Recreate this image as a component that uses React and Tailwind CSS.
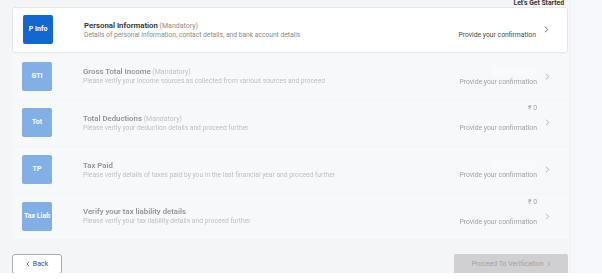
import React from 'react';

const rows = [
  {
    code: 'P Info',
    title: 'Personal Information',
    mandatory: true,
    desc: 'Details of personal information, contact details, and bank account details',
    top: 'none',
    active: true,
    h: 'h-[46px]',
  },
  {
    code: 'GTI',
    title: 'Gross Total Income',
    mandatory: true,
    desc: 'Please verify your income sources as collected from various sources and proceed',
    top: 'blur',
    h: 'h-[46px]',
  },
  {
    code: 'Tot',
    title: 'Total Deductions',
    mandatory: true,
    desc: 'Please verify your deduction details and proceed further',
    top: 'amount',
    h: 'h-[47px]',
  },
  {
    code: 'TP',
    title: 'Tax Paid',
    mandatory: false,
    desc: 'Please verify details of taxes paid by you in the last financial year and proceed further',
    top: 'blur',
    h: 'h-[47px]',
  },
  {
    code: 'Tax Liab',
    title: 'Verify your tax liability details',
    mandatory: false,
    desc: 'Please verify your tax liability details and proceed further',
    top: 'amount',
    h: 'h-[46px]',
  },
];

function Chevron({ className }) {
  return (
    <svg viewBox="0 0 6 8" className={className} fill="none" stroke="currentColor" strokeWidth="1.1" strokeLinecap="round" strokeLinejoin="round">
      <path d="M1.5 1 L4.5 4 L1.5 7" />
    </svg>
  );
}

function Row({ row }) {
  return (
    <div
      className={`${row.h} flex items-center ${
        row.active ? 'bg-white border border-[#e6e7ea] rounded-[3px]' : 'bg-white/60 opacity-50 border-t border-[#f3f3f5]'
      }`}
    >
      {/* icon tile */}
      <div className="ml-[10px] w-[30px] h-[29px] shrink-0 rounded-[2px] bg-[#1168d3] flex items-center justify-center overflow-hidden">
        <span className="text-white font-bold text-[7px] leading-none whitespace-nowrap">{row.code}</span>
      </div>

      {/* title + description */}
      <div className="ml-[31px] flex-1 min-w-0 flex flex-col">
        <div className="text-[7.8px] leading-[10px] text-[#2f2f2f] font-semibold whitespace-nowrap">
          {row.title}
          {row.mandatory && <span className="font-normal text-[#8c8c8c] text-[7px]"> (Mandatory)</span>}
        </div>
        <div className="text-[6.7px] leading-[8px] text-[#8a8a8a] whitespace-nowrap overflow-hidden">{row.desc}</div>
      </div>

      {/* right side */}
      <div className="flex flex-col items-end mb-[9px] shrink-0">
        {row.top === 'amount' && (
          <div className="h-[8px] leading-[8px] mb-[12px] text-[6.8px] text-[#555]">₹ 0</div>
        )}
        {row.top === 'blur' && (
          <div className="h-[10px] w-[45px] mt-[8px] mb-[2px] bg-white rounded-[2px] blur-[1px]" />
        )}
        {row.top === 'none' && <div className="h-[8px] mb-[12px]" />}
        <div className="leading-[8px] text-[6.8px] text-[#4a4a4a] whitespace-nowrap">Provide your confirmation</div>
      </div>
      <Chevron className="ml-[8px] mr-[18px] w-[5px] h-[7px] text-[#666] shrink-0" />
    </div>
  );
}

export default function App() {
  return (
    <div className="w-[602px] h-[279px] overflow-hidden flex flex-col bg-white font-['Roboto',sans-serif]">
      <div className="h-[273px] flex overflow-hidden">
        {/* main column */}
        <div className="w-[570px] bg-[#f4f5f7] pl-[12px] pr-[2px] flex flex-col">
          <div className="h-[9px] flex items-center justify-end pr-[4px]">
            <span className="text-[6.8px] font-bold text-[#333] leading-none">Let's Get Started</span>
          </div>

          <div className="flex flex-col">
            {rows.map((row) => (
              <Row key={row.code} row={row} />
            ))}
          </div>

          <div className="mt-[15px] flex justify-between">
            <button className="w-[50px] h-[20px] bg-white border border-[#a9adb3] rounded-[3px] flex items-center justify-center gap-[3px] text-[7px] text-[#34527e]">
              <Chevron className="w-[4px] h-[6px] rotate-180" />
              <span>Back</span>
            </button>
            <button className="w-[114px] h-[20px] bg-[#d0d0d2] rounded-[2px] flex items-center justify-center gap-[3px] text-[7px] text-[#a2a2a6]">
              <span>Proceed To Verification</span>
              <Chevron className="w-[4px] h-[6px]" />
            </button>
          </div>
        </div>

        {/* right strip */}
        <div className="flex-1 bg-[#f7f8fc] border-l border-[#eef0f4]" />
      </div>
    </div>
  );
}
